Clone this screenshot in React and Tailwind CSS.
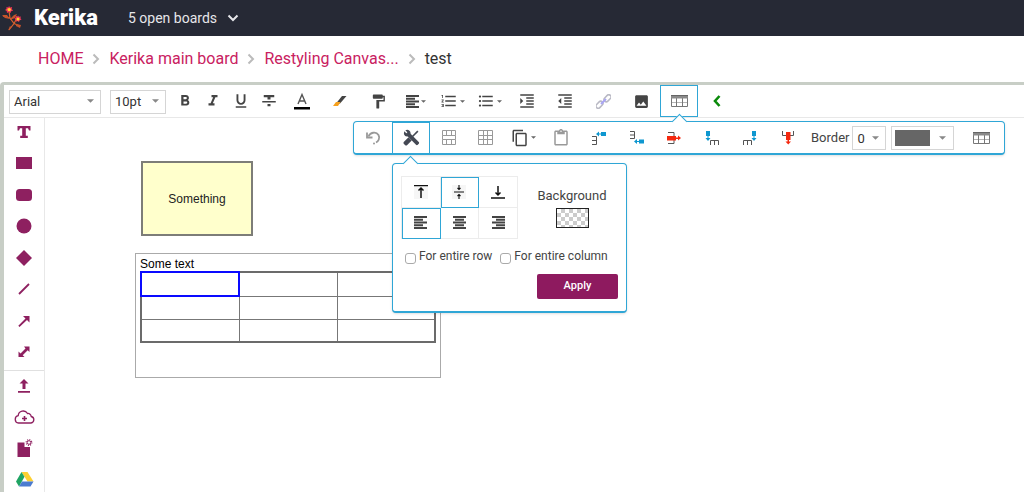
import { useState } from 'react';
import clsx from 'clsx';
import {
  MdFormatBold,
  MdFormatItalic,
  MdFormatUnderlined,
  MdFormatStrikethrough,
  MdFormatPaint,
  MdFormatListNumbered,
  MdFormatListBulleted,
  MdFormatIndentIncrease,
  MdFormatIndentDecrease,
  MdInsertPhoto,
  MdContentCopy,
  MdContentPaste,
} from 'react-icons/md';

function Logo() {
  return (
    <svg className="h-[26px] w-5" viewBox="0 0 20 26" fill="none" aria-hidden="true">
      <path d="M7 25L12 18.5L8 13L7 6M12 18.5L15 13M12 18.5L18 21M8 13L1 11" stroke="#d9622e" strokeWidth="1.2" />
      <path d="M0 10l5 0 3 4-5-1zM8 14l4-4 3-1-2 4-5 2zM14 19l5 1-1 3-4-2zM6 25.5l2-4.5 1.5 1.5z" fill="#c4532c" />
      <path d="M7 1l1.2 1.5 2-.5-.5 2 1.5 1.5-2 .8L8.5 8 7 7 5 8l-.3-2L3 5l1.5-1.3L4.5 2l1.8.5z" fill="#ef3358" />
      <path d="M16 10.5l1 1.3 1.8-.3-.3 1.8 1 1.4-1.8.5-.7 1.8-1.5-1-1.5.8-.2-1.8-1.3-1.2 1.3-1.2.2-1.5 1.5.4z" fill="#ef3358" />
      <circle cx="7.2" cy="4.6" r="1.7" fill="#ffd02a" />
      <circle cx="16" cy="13.9" r="1.5" fill="#ffd02a" />
    </svg>
  );
}

function Chevron({ className }) {
  return (
    <svg className={className} viewBox="0 0 8 12" fill="none" stroke="currentColor" strokeWidth="2" aria-hidden="true">
      <path d="M1.5 1.5L6 6L1.5 10.5" />
    </svg>
  );
}

function Caret({ className }) {
  return (
    <svg className={clsx('shrink-0', className)} viewBox="0 0 8 4" fill="currentColor" aria-hidden="true">
      <path d="M0 0h8L4 4z" />
    </svg>
  );
}

function TextColorIcon() {
  return (
    <svg className="h-[18px] w-4" viewBox="0 0 16 18" fill="none" aria-hidden="true">
      <path d="M4 12L8 2.5L12 12M5.3 9h5.4" stroke="#555" strokeWidth="1.4" />
      <path d="M0 15h16v2.5H0z" fill="#000" />
    </svg>
  );
}

function AlignIcon({ type = 'left' }) {
  const lines = {
    left: 'M0 1h13M0 3.75h9M0 6.5h13M0 9.25h9M0 12h13',
    center: 'M0 1h13M2 3.75h9M0 6.5h13M2 9.25h9M0 12h13',
    right: 'M0 1h13M4 3.75h9M0 6.5h13M4 9.25h9M0 12h13',
  };
  return (
    <svg className="h-[13px] w-[13px] shrink-0" viewBox="0 0 13 13" fill="none" stroke="#444" strokeWidth="2" aria-hidden="true">
      <path d={lines[type]} />
    </svg>
  );
}

function HighlightIcon() {
  return (
    <svg className="h-3 w-[14px]" viewBox="0 0 14 12" aria-hidden="true">
      <path d="M9 1h4.5L7 8.5H3z" fill="#444" />
      <path d="M3 7h4.5L5 11H0z" fill="#f5a01d" />
    </svg>
  );
}

function LinkIcon() {
  return (
    <svg className="h-[15px] w-[15px]" viewBox="0 0 15 15" fill="none" strokeWidth="1.5" aria-hidden="true">
      <rect x="7.5" y="2" width="8" height="4.5" rx="2.2" transform="rotate(-45 11.5 4.2)" stroke="#b9b9c4" />
      <rect x="-0.5" y="8.5" width="8" height="4.5" rx="2.2" transform="rotate(-45 3.5 10.8)" stroke="#b9b9c4" />
      <path d="M5 10L10 5" stroke="#a9a4f5" strokeWidth="2" />
    </svg>
  );
}

function TableIcon() {
  return (
    <svg className="h-3 w-[17px]" viewBox="0 0 17 12" fill="none" stroke="#777" aria-hidden="true">
      <path d="M1 7.5h15" stroke="#b5b5b5" />
      <path d="M.5 3v8.5h16V3M5.5 3v8.5M11.5 3v8.5" />
      <path d="M0 0h17v1H0z" fill="#666" stroke="none" />
      <path d="M0 1h17v2.5H0z" fill="#8a8a8a" stroke="none" />
    </svg>
  );
}

function UndoIcon() {
  return (
    <svg className="h-[14px] w-[15px]" viewBox="0 0 15 14" fill="none" aria-hidden="true">
      <path d="M2.5 5.5C4 1.5 10 0 12.5 4C14.5 7.5 12 10.5 10 11.5" stroke="#999" strokeWidth="1.8" />
      <path d="M1 1.5V6.5H6.5" stroke="#999" strokeWidth="1.8" />
      <circle cx="8" cy="12.5" r="1" fill="#999" />
    </svg>
  );
}

function ToolsIcon() {
  return (
    <svg className="h-[17px] w-[17px]" viewBox="0 0 24 24" fill="#444954" stroke="#444954" strokeWidth="1.5" aria-hidden="true">
      <path d="M21.7 20.3l-1.4 1.4a1 1 0 0 1-1.4 0L7 9.85A3.8 3.8 0 0 1 6 10A4 4 0 0 1 2.22 4.7L4.76 7.24L7.24 4.76L4.7 2.22A4 4 0 0 1 10 6a3.8 3.8 0 0 1-.15 1L21.7 18.9a1 1 0 0 1 0 1.4z" />
      <path d="M2.3 18.9a1 1 0 0 0 0 1.4l1.4 1.4a1 1 0 0 0 1.4 0l5.5-5.5-2.8-2.8z" strokeWidth="2.5" />
      <path d="M21 3L13 11" strokeWidth="2.2" />
    </svg>
  );
}

function MergeIcon() {
  return (
    <svg className="h-[15px] w-[14px]" viewBox="0 0 14 15" fill="none" stroke="#999" aria-hidden="true">
      <path d="M.5 5.5v-5h13v5zM.5 14.5v-5h13v5zM4.5.5v5M9.5.5v5M4.5 9.5v5M9.5 9.5v5M.5 5.5v4M13.5 5.5v4" />
    </svg>
  );
}

function GridIcon() {
  return (
    <svg className="h-[15px] w-[15px]" viewBox="0 0 15 15" fill="none" stroke="#999" aria-hidden="true">
      <path d="M.5.5h14v14H.5zM.5 5.5h14M.5 9.5h14M5.5.5v14M9.5.5v14" />
    </svg>
  );
}

function RowAboveIcon() {
  return (
    <svg className="h-[14px] w-4" viewBox="0 0 16 14" fill="none" aria-hidden="true">
      <path d="M1 5.5h4.5v8H1M1 9.5h4.5" stroke="#555" />
      <path d="M10 1h5v4h-5zM5 3l3-2.5v2h2v1H8v2z" fill="#0e97d0" />
    </svg>
  );
}

function RowBelowIcon() {
  return (
    <svg className="h-[14px] w-4" viewBox="0 0 16 14" fill="none" aria-hidden="true">
      <path d="M1 .5h4.5v7H1M1 4h4.5" stroke="#555" />
      <path d="M10 8.5h5v4h-5zM5 10.5L8 8v2h2v1H8v2z" fill="#0e97d0" />
    </svg>
  );
}

function RowDeleteIcon() {
  return (
    <svg className="h-[14px] w-4" viewBox="0 0 16 14" fill="none" aria-hidden="true">
      <path d="M2 1.5h6v11H2" stroke="#555" />
      <path d="M1 5h9v1.5h2V4.5L15 7l-3 2.5V8h-2v1.5H1z" fill="#f5290f" />
    </svg>
  );
}

function ColumnBeforeIcon() {
  return (
    <svg className="h-[14px] w-[14px]" viewBox="0 0 14 14" fill="none" aria-hidden="true">
      <path d="M5.5 14V9.5h8V14M9.5 9.5V14" stroke="#555" />
      <path d="M1 0h4v5H1zM3 10L.5 7h2V5h1v2h2z" fill="#0e97d0" />
    </svg>
  );
}

function ColumnAfterIcon() {
  return (
    <svg className="h-[14px] w-[14px]" viewBox="0 0 14 14" fill="none" aria-hidden="true">
      <path d="M.5 14V9.5h8V14M4.5 9.5V14" stroke="#555" />
      <path d="M9 0h4v5H9zM11 10L8.5 7h2V5h1v2h2z" fill="#0e97d0" />
    </svg>
  );
}

function ColumnDeleteIcon() {
  return (
    <svg className="h-[14px] w-3" viewBox="0 0 12 14" fill="none" aria-hidden="true">
      <path d="M.5 0v4.5h11V0" stroke="#555" />
      <path d="M4 1h4.5v8H7v1.5h2L6.25 13.5 3.5 10.5h2V9H4z" fill="#f5290f" />
    </svg>
  );
}

function VerticalAlignIcon({ type }) {
  return (
    <svg className="h-[14px] w-[14px]" viewBox="0 0 14 14" fill="none" stroke="#111" aria-hidden="true">
      {type !== 'bottom' && <path d="M0 0h14v14H0z" fill="#f6f6f6" stroke="none" />}
      {type === 'top' && <path d="M0 .5h14M7 13V3M4.5 5.5L7 3l2.5 2.5" strokeWidth="1.5" />}
      {type === 'middle' && <path d="M2 7h10M7 0v5M5.5 3L7 4.5 8.5 3M7 14V9M5.5 11L7 9.5 8.5 11" strokeWidth="1.1" />}
      {type === 'bottom' && <path d="M0 13h14M7 1v9M4.5 7.5L7 10l2.5-2.5" strokeWidth="1.5" />}
    </svg>
  );
}

const SHAPES = [
  { label: 'Text', art: <path d="M1.5 2h13v4.5H13L12 4.2H9.8v7.6h2V14H4.2v-2.200h2V4.200H4L3 6.500H1.500z" /> },
  { label: 'Rectangle', art: <path d="M0 2h16v12H0z" /> },
  { label: 'Rounded rectangle', art: <rect y="2" width="16" height="12" rx="3.5" /> },
  { label: 'Ellipse', art: <circle cx="8" cy="8" r="7.5" /> },
  { label: 'Diamond', art: <path d="M8 0l8 8-8 8-8-8z" /> },
  { label: 'Line', art: <path d="M3 13L13 3" stroke="currentColor" strokeWidth="1.8" /> },
  { label: 'Arrow', art: <path d="M3.5 14l-1.2-1.2L9.5 5.6 7 3H13.5v6.5L11 7z" /> },
  { label: 'Double arrow', art: <path d="M8 2.5h5.5V8l-1.8-1.8-5 5L8.5 13H2.5V7.5l2 2 5-5z" /> },
];

const UPLOADS = [
  { label: 'Upload file', art: <path d="M8 1l4.5 4.5h-3V11h-3V5.5h-3zM2 13h12v1.8H2z" /> },
  {
    label: 'Add from cloud',
    wide: true,
    art: (
      <g fill="none" stroke="currentColor" strokeWidth="1.3">
        <path d="M4 15a3.7 3.7 0 0 1-.3-7.3A5 5 0 0 1 13 5.5a3.2 3.2 0 0 1 3.7 3A3.3 3.3 0 0 1 16.5 15z" />
        <path d="M10 8v5M7.5 10.5h5" strokeWidth="1.6" />
      </g>
    ),
  },
  {
    label: 'New document',
    wide: true,
    art: (
      <g>
        <path d="M3 3.5h7v4.5h5.5V18H3z" />
        <circle cx="14.5" cy="3.5" r="1.8" fill="none" stroke="currentColor" />
        <circle cx="14.5" cy="3.5" r="2.8" fill="none" stroke="currentColor" strokeDasharray="1 1.2" strokeWidth="1.2" />
      </g>
    ),
  },
  {
    label: 'Google Drive',
    wide: true,
    art: (
      <g>
        <path d="M7 2h6l6 9.5h-6z" fill="#fdd032" />
        <path d="M7 2l3 4.8L4.5 16.5 1.5 11.5z" fill="#1fa463" />
        <path d="M7.5 11.5H19l-3 5H4.5z" fill="#4b7bd0" />
      </g>
    ),
  },
];

function SidebarButton({ item }) {
  return (
    <button type="button" aria-label={item.label} className="flex h-4 w-full items-center justify-center">
      {item.wide ? (
        <svg className="h-[18px] w-[21px] shrink-0 overflow-visible" viewBox="0 0 20 18" fill="currentColor">{item.art}</svg>
      ) : (
        <svg className="h-4 w-4 shrink-0" viewBox="0 0 16 16" fill="currentColor">{item.art}</svg>
      )}
    </button>
  );
}

function ToolButton({ label, caret, active, className = 'w-[38px]', children }) {
  return (
    <button
      type="button"
      aria-label={label}
      className={clsx('flex h-8 shrink-0 items-center justify-center text-[#444]', caret && 'gap-[2px]', active && 'border border-[#2fa6d6]', className)}
    >
      {children}
      {caret && <Caret className="h-[3px] w-[5px] text-[#666]" />}
    </button>
  );
}

function Select({ label, className, options }) {
  return (
    <div className={clsx('relative h-6 shrink-0', className)}>
      <select aria-label={label} className="h-full w-full appearance-none border border-[#d5d5d5] bg-white pl-1 text-[13px] text-[#333]">
        {options.map((o) => (
          <option key={o}>{o}</option>
        ))}
      </select>
      <Caret className="pointer-events-none absolute top-[10px] right-[7px] h-1 w-[7px] text-[#888]" />
    </div>
  );
}

// little arrow that ties a popover to its button
function Notch({ className }) {
  return <span className={clsx('absolute h-[11px] w-[11px] rotate-45 border-t border-l border-[#2fa6d6] bg-white', className)} />;
}

const CELL_ALIGN = [
  { id: 'top', label: 'Align top', icon: <VerticalAlignIcon type="top" /> },
  { id: 'middle', label: 'Align middle', icon: <VerticalAlignIcon type="middle" /> },
  { id: 'bottom', label: 'Align bottom', icon: <VerticalAlignIcon type="bottom" /> },
  { id: 'left', label: 'Align left', icon: <AlignIcon type="left" /> },
  { id: 'center', label: 'Align center', icon: <AlignIcon type="center" /> },
  { id: 'right', label: 'Align right', icon: <AlignIcon type="right" /> },
];

function CellPanel() {
  const [vertical, setVertical] = useState('middle');
  const [horizontal, setHorizontal] = useState('left');

  const pick = (id, i) => (i < 3 ? setVertical(id) : setHorizontal(id));

  return (
    <div className="absolute top-[41px] left-0 z-20 w-[235px] rounded border border-b-2 border-[#2fa6d6] bg-white px-2 pt-3 pb-3 text-[#444] shadow-sm">
      <Notch className="-top-[6px] left-3" />
      <div className="flex items-start">
        <div className="grid w-[117px] grid-cols-3 border-t border-l border-[#ececec]">
          {CELL_ALIGN.map((a, i) => (
            <button
              key={a.id}
              type="button"
              aria-label={a.label}
              onClick={() => pick(a.id, i)}
              className={clsx(
                'flex h-[31px] items-center justify-center border-r border-b border-[#ececec]',
                (a.id === vertical || a.id === horizontal) && 'outline outline-[#2fa6d6] -outline-offset-1',
              )}
            >
              {a.icon}
            </button>
          ))}
        </div>
        <div className="flex flex-1 flex-col items-center gap-1 pt-3 pl-2">
          <span className="text-[13px] leading-4">Background</span>
          <button
            type="button"
            aria-label="Background color"
            className="h-5 w-[33px] border border-[#222] bg-[conic-gradient(#ccc_25%,#fff_0_50%,#ccc_0_75%,#fff_0)] bg-[length:8px_8px]"
          />
        </div>
      </div>
      <div className="mt-[5px] flex items-center gap-2 pl-1 text-[12px] leading-6">
        <label className="flex items-center gap-[3px]">
          <input type="checkbox" className="mt-[5px] h-[11px] w-[11px] appearance-none rounded-[3px] border border-[#aaa] bg-white" />
          For entire row
        </label>
        <label className="flex items-center gap-[3px]">
          <input type="checkbox" className="mt-[5px] h-[11px] w-[11px] appearance-none rounded-[3px] border border-[#aaa] bg-white" />
          For entire column
        </label>
      </div>
      <button type="button" className="mt-[6px] ml-auto block h-[25px] w-[81px] rounded-[2px] bg-[#8e1a5f] text-[11px] font-medium text-white">
        Apply
      </button>
    </div>
  );
}

function TableToolbar() {
  return (
    <div className="absolute top-[3px] left-[308px] z-10 flex h-[34px] items-center rounded border border-b-2 border-[#2fa6d6] bg-white pr-1 shadow-sm">
      <Notch className="-top-[6px] left-[320px]" />
      <ToolButton label="Undo"><UndoIcon /></ToolButton>
      <div className="relative">
        <ToolButton label="Cell settings" active><ToolsIcon /></ToolButton>
        <CellPanel />
      </div>
      <ToolButton label="Merge cells" className="w-[37px]"><MergeIcon /></ToolButton>
      <ToolButton label="Split cells" className="w-[37px]"><GridIcon /></ToolButton>
      <ToolButton label="Copy" caret><MdContentCopy size={18} /></ToolButton>
      <ToolButton label="Paste"><MdContentPaste size={18} className="text-[#999]" /></ToolButton>
      <ToolButton label="Insert row above"><RowAboveIcon /></ToolButton>
      <ToolButton label="Insert row below" className="w-[37px]"><RowBelowIcon /></ToolButton>
      <ToolButton label="Delete row"><RowDeleteIcon /></ToolButton>
      <ToolButton label="Insert column before"><ColumnBeforeIcon /></ToolButton>
      <ToolButton label="Insert column after"><ColumnAfterIcon /></ToolButton>
      <ToolButton label="Delete column"><ColumnDeleteIcon /></ToolButton>
      <span className="mr-[3px] ml-1 text-[13px] text-[#444]">Border</span>
      <Select label="Border width" className="w-[34px]" options={['0', '1', '2', '3']} />
      <button
        type="button"
        aria-label="Border color"
        className="ml-[5px] flex h-6 w-[63px] items-center justify-between border border-[#d5d5d5] bg-white pr-[7px] pl-[3px]"
      >
        <span className="h-4 w-[35px] bg-[#666]" />
        <Caret className="h-1 w-[7px] text-[#888]" />
      </button>
      <ToolButton label="Table properties" className="ml-2 w-[38px]"><TableIcon /></ToolButton>
    </div>
  );
}

function FormatToolbar() {
  return (
    <div className="flex h-[33px] items-center border-b border-[#e8e8e8] pl-[5px]">
      <Select label="Font" className="w-[92px]" options={['Arial', 'Georgia', 'Verdana']} />
      <Select label="Font size" className="mr-[5px] ml-[9px] w-[56px]" options={['10pt', '12pt', '14pt']} />
      <ToolButton label="Bold" className="w-7"><MdFormatBold size={18} /></ToolButton>
      <ToolButton label="Italic" className="w-7"><MdFormatItalic size={18} /></ToolButton>
      <ToolButton label="Underline" className="w-7"><MdFormatUnderlined size={18} /></ToolButton>
      <ToolButton label="Strikethrough" className="w-7"><MdFormatStrikethrough size={18} /></ToolButton>
      <ToolButton label="Text color"><TextColorIcon /></ToolButton>
      <ToolButton label="Highlight"><HighlightIcon /></ToolButton>
      <ToolButton label="Copy format"><MdFormatPaint size={17} /></ToolButton>
      <ToolButton label="Align" caret className="w-[37px]"><AlignIcon /></ToolButton>
      <ToolButton label="Numbered list" caret className="w-[37px]"><MdFormatListNumbered size={18} /></ToolButton>
      <ToolButton label="Bulleted list" caret className="w-[37px]"><MdFormatListBulleted size={18} /></ToolButton>
      <ToolButton label="Indent"><MdFormatIndentIncrease size={18} /></ToolButton>
      <ToolButton label="Outdent"><MdFormatIndentDecrease size={18} /></ToolButton>
      <ToolButton label="Link"><LinkIcon /></ToolButton>
      <ToolButton label="Image"><MdInsertPhoto size={17} /></ToolButton>
      <ToolButton label="Table" active><TableIcon /></ToolButton>
      <ToolButton label="Collapse toolbar">
        <svg className="h-3 w-2" viewBox="0 0 8 12" fill="none" stroke="#0a8a0a" strokeWidth="2.6">
          <path d="M6.5 1L2 6l4.5 5" />
        </svg>
      </ToolButton>
    </div>
  );
}

function Canvas() {
  return (
    <main className="relative flex-1">
      <TableToolbar />
      <div className="absolute top-[43px] left-[96px] flex h-[75px] w-28 items-center justify-center border-2 border-[#7d7d78] bg-[#ffffcc] font-['Liberation_Sans',sans-serif] text-[12px] text-[#222]">
        Something
      </div>
      <div className="absolute top-[135px] left-[90px] h-[125px] w-[306px] border border-[#aaa] px-1 pt-[3px] font-['Liberation_Sans',sans-serif] text-[12px] leading-[14px] text-black">
        <p>Some text</p>
        <table className="w-full table-fixed border-collapse border-2 border-[#6b6b6b]" aria-label="Some text">
          <tbody>
            {[0, 1, 2].map((row) => (
              <tr key={row} className="h-[23px] first:h-6">
                {[0, 1, 2].map((col) => (
                  <td
                    key={col}
                    className={clsx('border border-[#777]', row === 0 && col === 0 && 'outline-2 -outline-offset-1 outline-[#0a0aff]')}
                  />
                ))}
              </tr>
            ))}
          </tbody>
        </table>
      </div>
    </main>
  );
}

export default function App() {
  return (
    <div className="flex min-h-screen flex-col overflow-x-hidden bg-white font-[Roboto,sans-serif]">
      <header className="flex h-9 items-center bg-[#262935] pl-[2px] text-white">
        <Logo />
        <span className="ml-3 w-[66px] text-[22px] leading-8 font-black">Kerika</span>
        <button type="button" className="ml-7 flex items-center gap-3 text-[14px] leading-5 text-[#e6e6ea]">
          5 open boards
          <Chevron className="h-3 w-2 rotate-90" />
        </button>
      </header>

      <nav className="flex h-[46px] items-center gap-[9px] pl-[38px] text-[16px] text-[#c9215f]">
        <a href="#home">HOME</a>
        <Chevron className="h-3 w-2 text-[#bbb]" />
        <a href="#main">Kerika main board</a>
        <Chevron className="h-3 w-2 text-[#bbb]" />
        <a href="#canvas">Restyling Canvas...</a>
        <Chevron className="h-3 w-2 text-[#bbb]" />
        <span className="text-[#333]">test</span>
      </nav>

      <div className="flex flex-1 flex-col rounded-tl border-t-[3px] border-l-4 border-[#c8cec6]">
        <FormatToolbar />
        <div className="flex flex-1">
          <aside className="w-[41px] border-r border-[#e8e8e8] text-[#8e2060]">
            <div className="flex h-[253px] flex-col justify-between border-b border-[#e0e0e0] pt-[6px] pb-[10px]">
              {SHAPES.map((s) => (
                <SidebarButton key={s.label} item={s} />
              ))}
            </div>
            <div className="flex flex-col gap-[15px] pt-[7px]">
              {UPLOADS.map((s) => (
                <SidebarButton key={s.label} item={s} />
              ))}
            </div>
          </aside>
          <Canvas />
        </div>
      </div>
    </div>
  );
}
